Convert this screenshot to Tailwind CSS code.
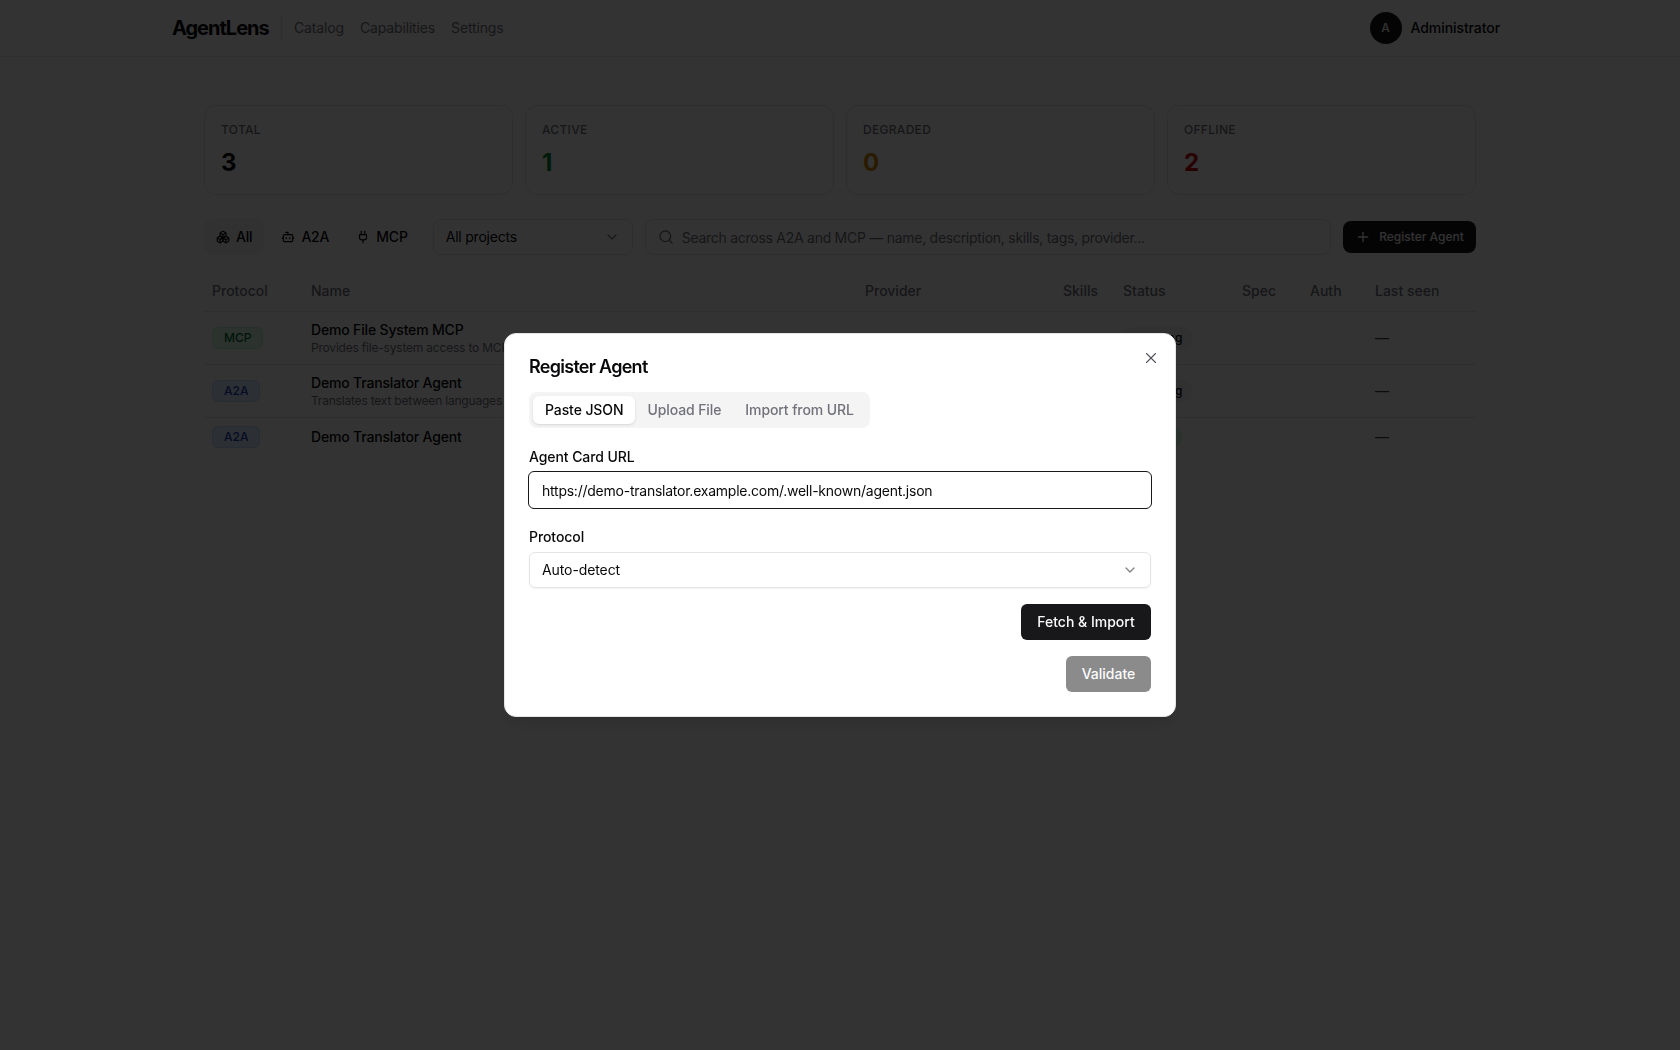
<!DOCTYPE html>
<html lang="en">

<head>
    <meta charset="UTF-8">
    <meta name="viewport" content="width=device-width, initial-scale=1.0">
    <title>AgentLens</title>
    <script src="https://cdn.jsdelivr.net/npm/@tailwindcss/browser@4"></script>
</head>

<body class="bg-white text-zinc-950 font-['Inter',sans-serif] antialiased h-[1050px] overflow-hidden">
    <header class="h-[57px] border-b border-zinc-200 bg-white">
        <div class="max-w-[1360px] h-14 mx-auto px-3 flex items-center justify-between">
            <div class="flex items-center">
                <span class="text-xl font-bold tracking-[-1px] w-[97px] whitespace-nowrap">AgentLens</span>
                <span class="w-px h-6 bg-zinc-200 ml-3 mr-3"></span>
                <nav class="flex items-center gap-4 text-sm text-zinc-500 tracking-[-0.15px]">
                    <a href="#">Catalog</a>
                    <a href="#">Capabilities</a>
                    <a href="#">Settings</a>
                </nav>
            </div>
            <div class="flex items-center gap-[9px] pr-2">
                <span class="w-8 h-8 rounded-full bg-zinc-900 text-zinc-50 text-xs font-medium flex items-center justify-center">A</span>
                <span class="text-sm font-medium tracking-[-0.08px]">Administrator</span>
            </div>
        </div>
    </header>

    <main class="w-[1272px] mx-auto pt-12">
        <section class="grid grid-cols-4 gap-3">
            <div class="h-[90px] border border-zinc-200 rounded-xl p-4">
                <p class="text-xs font-medium text-zinc-500 uppercase leading-4 tracking-wide">Total</p>
                <p class="text-2xl font-bold mt-[9px]">3</p>
            </div>
            <div class="h-[90px] border border-zinc-200 rounded-xl p-4">
                <p class="text-xs font-medium text-zinc-500 uppercase leading-4 tracking-wide">Active</p>
                <p class="text-2xl font-bold mt-[9px] text-green-700">1</p>
            </div>
            <div class="h-[90px] border border-zinc-200 rounded-xl p-4">
                <p class="text-xs font-medium text-zinc-500 uppercase leading-4 tracking-wide">Degraded</p>
                <p class="text-2xl font-bold mt-[9px] text-yellow-600">0</p>
            </div>
            <div class="h-[90px] border border-zinc-200 rounded-xl p-4">
                <p class="text-xs font-medium text-zinc-500 uppercase leading-4 tracking-wide">Offline</p>
                <p class="text-2xl font-bold mt-[9px] text-red-700">2</p>
            </div>
        </section>

        <section class="flex items-center mt-6 h-9">
            <div class="flex items-center gap-[5px] text-sm font-medium tracking-[-0.2px] mr-[13px]">
                <button class="h-9 px-3 rounded-lg bg-zinc-100 flex items-center gap-1.5">
                    <svg class="w-[14px] h-[14px]" viewBox="0 0 24 24" fill="none" stroke="currentColor" stroke-width="2" stroke-linecap="round" stroke-linejoin="round"><path d="M2.97 12.92A2 2 0 0 0 2 14.63v3.24a2 2 0 0 0 .97 1.71l3 1.8a2 2 0 0 0 2.06 0L12 19v-5.5l-5-3-4.03 2.42Z"/><path d="m7 16.5-4.74-2.85"/><path d="m7 16.5 5-3"/><path d="M7 16.5v5.17"/><path d="M12 13.5V19l3.97 2.38a2 2 0 0 0 2.06 0l3-1.8a2 2 0 0 0 .97-1.71v-3.24a2 2 0 0 0-.97-1.71L17 10.5l-5 3Z"/><path d="m17 16.5-5-3"/><path d="m17 16.5 4.74-2.85"/><path d="M17 16.5v5.17"/><path d="M7.97 4.42A2 2 0 0 0 7 6.13v4.37l5 3 5-3V6.13a2 2 0 0 0-.97-1.71l-3-1.8a2 2 0 0 0-2.06 0l-3 1.8Z"/><path d="M12 8 7.26 5.15"/><path d="m12 8 4.74-2.85"/><path d="M12 13.5V8"/></svg>
                    All
                </button>
                <button class="h-9 px-3 rounded-lg flex items-center gap-1.5">
                    <svg class="w-[14px] h-[14px]" viewBox="0 0 24 24" fill="none" stroke="currentColor" stroke-width="2" stroke-linecap="round" stroke-linejoin="round"><path d="M12 8V4H8"/><rect width="16" height="12" x="4" y="8" rx="2"/><path d="M2 14h2"/><path d="M20 14h2"/><path d="M15 13v2"/><path d="M9 13v2"/></svg>
                    A2A
                </button>
                <button class="h-9 px-3 -ml-0.5 rounded-lg flex items-center gap-1.5">
                    <svg class="w-[14px] h-[14px]" viewBox="0 0 24 24" fill="none" stroke="currentColor" stroke-width="2" stroke-linecap="round" stroke-linejoin="round"><path d="M12 22v-5"/><path d="M9 8V2"/><path d="M15 8V2"/><path d="M18 8v5a4 4 0 0 1-4 4h-4a4 4 0 0 1-4-4V8Z"/></svg>
                    MCP
                </button>
            </div>
            <div class="w-[200px] h-9 border border-zinc-200 rounded-lg px-3 flex items-center justify-between text-sm tracking-[-0.22px] mr-3">
                All projects
                <svg class="w-4 h-4 opacity-50" viewBox="0 0 24 24" fill="none" stroke="currentColor" stroke-width="2" stroke-linecap="round" stroke-linejoin="round"><path d="m6 9 6 6 6-6"/></svg>
            </div>
            <div class="flex-1 h-9 border border-zinc-200 rounded-lg flex items-center pl-3 mr-3">
                <svg class="w-4 h-4 text-zinc-500 shrink-0" viewBox="0 0 24 24" fill="none" stroke="currentColor" stroke-width="2" stroke-linecap="round" stroke-linejoin="round"><circle cx="11" cy="11" r="8"/><path d="m21 21-4.3-4.3"/></svg>
                <input class="flex-1 ml-2 pt-0.5 text-sm tracking-[-0.27px] outline-none placeholder:text-zinc-500" placeholder="Search across A2A and MCP — name, description, skills, tags, provider...">
            </div>
            <button class="w-[133px] h-8 rounded-lg bg-zinc-900 text-zinc-50 text-xs font-medium flex items-center justify-center gap-2">
                <svg class="w-4 h-4" viewBox="0 0 24 24" fill="none" stroke="currentColor" stroke-width="2" stroke-linecap="round" stroke-linejoin="round"><path d="M5 12h14"/><path d="M12 5v14"/></svg>
                Register Agent
            </button>
        </section>

        <table class="w-full table-fixed mt-4 text-sm text-left">
            <thead>
                <tr class="h-10 border-b border-zinc-200 text-zinc-500">
                    <th class="w-[99px] px-2 font-medium">Protocol</th>
                    <th class="w-[554px] px-2 font-medium">Name</th>
                    <th class="w-[198px] px-2 font-medium">Provider</th>
                    <th class="w-[60px] px-2 font-medium">Skills</th>
                    <th class="w-[119px] px-2 font-medium">Status</th>
                    <th class="w-[68px] px-2 font-medium">Spec</th>
                    <th class="w-[65px] px-2 font-medium">Auth</th>
                    <th class="px-2 font-medium">Last seen</th>
                </tr>
            </thead>
            <tbody>
                <tr class="border-b border-zinc-200">
                    <td class="p-2"><span class="inline-flex h-[22px] items-center px-[11px] rounded-md border border-green-200 bg-green-100 text-green-800 text-xs font-medium">MCP</span></td>
                    <td class="p-2">
                        <p class="font-medium leading-5 tracking-[-0.17px]">Demo File System MCP</p>
                        <p class="text-xs text-zinc-500 leading-4 tracking-[-0.2px]">Provides file-system access to MCP clients</p>
                    </td>
                    <td class="p-2"></td>
                    <td class="p-2"></td>
                    <td class="p-2"><span class="inline-flex h-[22px] items-center px-2.5 rounded-full bg-zinc-100 text-xs font-medium tracking-[0.4px]">Pending</span></td>
                    <td class="p-2"></td>
                    <td class="p-2"></td>
                    <td class="p-2 text-zinc-700">—</td>
                </tr>
                <tr class="border-b border-zinc-200">
                    <td class="p-2"><span class="inline-flex h-[22px] items-center px-[11px] rounded-md border border-blue-200 bg-blue-100 text-blue-800 text-xs font-medium">A2A</span></td>
                    <td class="p-2">
                        <p class="font-medium leading-5 tracking-[-0.17px]">Demo Translator Agent</p>
                        <p class="text-xs text-zinc-500 leading-4 tracking-[-0.2px]">Translates text between languages</p>
                    </td>
                    <td class="p-2"></td>
                    <td class="p-2"></td>
                    <td class="p-2"><span class="inline-flex h-[22px] items-center px-2.5 rounded-full bg-zinc-100 text-xs font-medium tracking-[0.4px]">Pending</span></td>
                    <td class="p-2"></td>
                    <td class="p-2"></td>
                    <td class="p-2 text-zinc-700">—</td>
                </tr>
                <tr>
                    <td class="p-2"><span class="inline-flex h-[22px] items-center px-[11px] rounded-md border border-blue-200 bg-blue-100 text-blue-800 text-xs font-medium">A2A</span></td>
                    <td class="p-2"><p class="font-medium leading-5 tracking-[-0.17px]">Demo Translator Agent</p></td>
                    <td class="p-2"></td>
                    <td class="p-2"></td>
                    <td class="p-2"><span class="inline-flex h-[22px] items-center px-2.5 rounded-full border border-green-200 bg-green-100 text-green-800 text-xs font-medium tracking-[0.2px]">Active</span></td>
                    <td class="p-2"></td>
                    <td class="p-2"></td>
                    <td class="p-2 text-zinc-700">—</td>
                </tr>
            </tbody>
        </table>
    </main>

    <div class="fixed inset-0 bg-black/80"></div>

    <div class="fixed left-[504px] top-[333px] w-[672px] h-[384px] bg-white border border-zinc-200 rounded-xl shadow-lg px-6 pt-6">
        <button class="absolute right-[15px] top-[15px] text-zinc-600">
            <svg class="w-[18px] h-[18px]" viewBox="0 0 24 24" fill="none" stroke="currentColor" stroke-width="1.5" stroke-linecap="round" stroke-linejoin="round"><path d="M18 6 6 18"/><path d="m6 6 12 12"/></svg>
        </button>
        <h2 class="text-lg font-semibold leading-[18px] tracking-[-0.04em]">Register Agent</h2>
        <div class="inline-flex h-9 mt-4 p-1 rounded-lg bg-zinc-100 text-sm font-medium tracking-[-0.1px] text-zinc-500">
            <button class="px-3 rounded-md bg-white text-zinc-950 shadow-sm">Paste JSON</button>
            <button class="px-3">Upload File</button>
            <button class="px-3">Import from URL</button>
        </div>
        <label class="block mt-[19px] text-sm font-medium leading-5 tracking-[-0.08px]">Agent Card URL</label>
        <input class="block w-[calc(100%+2px)] -ml-px h-[38px] mt-1 px-[13px] text-sm tracking-[-0.24px] rounded-md border border-zinc-900 outline-none" value="https://demo-translator.example.com/.well-known/agent.json">
        <label class="block mt-[18px] text-sm font-medium leading-5 tracking-[-0.08px]">Protocol</label>
        <div class="w-full h-9 mt-[5px] px-3 text-sm tracking-[-0.1px] rounded-md border border-zinc-200 shadow-xs flex items-center justify-between">
            Auto-detect
            <svg class="w-4 h-4 opacity-50" viewBox="0 0 24 24" fill="none" stroke="currentColor" stroke-width="2" stroke-linecap="round" stroke-linejoin="round"><path d="m6 9 6 6 6-6"/></svg>
        </div>
        <div class="flex justify-end mt-4">
            <button class="w-[130px] h-9 rounded-md bg-zinc-900 text-zinc-50 text-sm font-medium">Fetch &amp; Import</button>
        </div>
        <div class="flex justify-end mt-4">
            <button class="w-[85px] h-9 rounded-md bg-zinc-900 text-zinc-50 text-sm font-medium opacity-50">Validate</button>
        </div>
    </div>
</body>

</html>
